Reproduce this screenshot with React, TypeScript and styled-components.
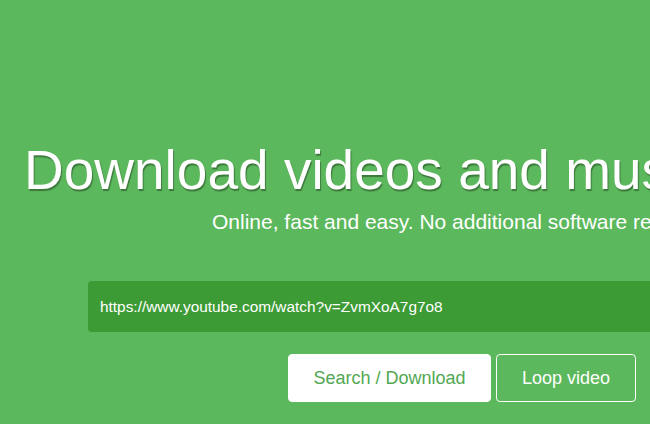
import styled, { createGlobalStyle } from "styled-components";

const GlobalStyle = createGlobalStyle`
  html, body {
    margin: 0;
    padding: 0;
    background: #5cb85c;
  }
  body {
    font-family: "Liberation Sans", Arial, sans-serif;
  }
`;

export default function App() {
  return (
    <>
      <GlobalStyle />
      <Hero>
        <Headline>Download videos and music from YouTube</Headline>
        <Tagline>
          Online, fast and easy. No additional software required.
        </Tagline>
        <SearchForm onSubmit={(e) => e.preventDefault()}>
          <UrlInput
            type="text"
            defaultValue="https://www.youtube.com/watch?v=ZvmXoA7g7o8"
          />
          <Actions>
            <Button type="submit" $variant="solid">
              Search / Download
            </Button>
            <Button type="button" $variant="outline">
              Loop video
            </Button>
          </Actions>
        </SearchForm>
      </Hero>
    </>
  );
}

const Hero = styled.section`
  width: 650px;
  height: 424px;
  overflow: hidden;
  background: #5cb85c;
  color: #fff;
  padding-top: 142px;
  box-sizing: border-box;
`;

const Headline = styled.h1`
  margin: 0 0 0 24px;
  font-size: 55px;
  font-weight: normal;
  line-height: 56px;
  white-space: nowrap;
  text-shadow: 1px 2px 1px rgba(0, 0, 0, 0.35);
`;

const Tagline = styled.p`
  margin: 11px 0 0 212px;
  font-size: 21px;
  line-height: 26px;
  white-space: nowrap;
`;

const SearchForm = styled.form`
  margin: 46px 0 0 88px;
  display: flex;
  flex-direction: column;
`;

const UrlInput = styled.input`
  width: 640px;
  height: 51px;
  box-sizing: border-box;
  border: none;
  border-radius: 4px;
  background: #3d9b35;
  color: #fff;
  font-family: "Liberation Sans", Arial, sans-serif;
  font-size: 15.4px;
  padding: 0 12px;
  outline: none;
`;

const Actions = styled.div`
  display: flex;
  gap: 5px;
  margin: 22px 0 0 200px;
`;

const Button = styled.button<{ $variant: "solid" | "outline" }>`
  height: 48px;
  box-sizing: border-box;
  border-radius: 4px;
  font-family: "Liberation Sans", Arial, sans-serif;
  font-size: 18px;
  cursor: pointer;
  padding: 0;
  border: 1px solid #fff;
  background: ${(p) => (p.$variant === "solid" ? "#fff" : "transparent")};
  color: ${(p) => (p.$variant === "solid" ? "#52a852" : "#fff")};
  width: ${(p) => (p.$variant === "solid" ? "203px" : "140px")};
`;
